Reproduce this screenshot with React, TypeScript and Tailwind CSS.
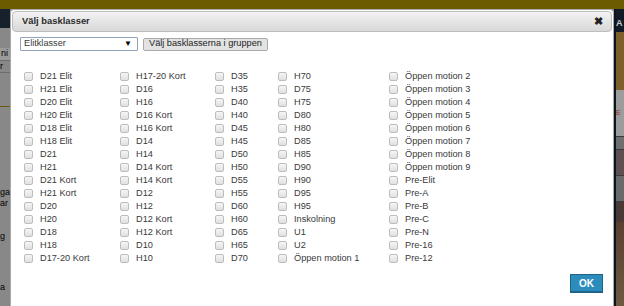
const columns: { width: string; items: string[] }[] = [
  {
    width: 'w-[96px]',
    items: ['D21 Elit', 'H21 Elit', 'D20 Elit', 'H20 Elit', 'D18 Elit', 'H18 Elit', 'D21', 'H21', 'D21 Kort', 'H21 Kort', 'D20', 'H20', 'D18', 'H18', 'D17-20 Kort'],
  },
  {
    width: 'w-[95px]',
    items: ['H17-20 Kort', 'D16', 'H16', 'D16 Kort', 'H16 Kort', 'D14', 'H14', 'D14 Kort', 'H14 Kort', 'D12', 'H12', 'D12 Kort', 'H12 Kort', 'D10', 'H10'],
  },
  {
    width: 'w-[63px]',
    items: ['D35', 'H35', 'D40', 'H40', 'D45', 'H45', 'D50', 'H50', 'D55', 'H55', 'D60', 'H60', 'D65', 'H65', 'D70'],
  },
  {
    width: 'w-[111px]',
    items: ['H70', 'D75', 'H75', 'D80', 'H80', 'D85', 'H85', 'D90', 'H90', 'D95', 'H95', 'Inskolning', 'U1', 'U2', 'Öppen motion 1'],
  },
  {
    width: 'w-[120px]',
    items: ['Öppen motion 2', 'Öppen motion 3', 'Öppen motion 4', 'Öppen motion 5', 'Öppen motion 6', 'Öppen motion 7', 'Öppen motion 8', 'Öppen motion 9', 'Pre-Elit', 'Pre-A', 'Pre-B', 'Pre-C', 'Pre-N', 'Pre-16', 'Pre-12'],
  },
];

function Checkbox() {
  return (
    <span className="block h-[9px] w-[9px] shrink-0 rounded-[2px] border border-[#bdbdbd] bg-gradient-to-b from-[#f6f6f6] to-[#e0e0e0]" />
  );
}

export default function App() {
  return (
    <div
      className="flex h-[306px] w-[624px] flex-col overflow-hidden bg-[#878787]"
      style={{ fontFamily: '"Liberation Sans", Arial, sans-serif' }}
    >
      {/* olive strip at the top of the page behind the modal */}
      <div className="h-[9px] shrink-0 bg-[#6d5b00]" />

      <div className="flex min-h-0 flex-1">
        {/* left page, dimmed */}
        <div className="flex w-[10px] shrink-0 flex-col overflow-hidden bg-[#888888] text-[9px] leading-[11px] text-black">
          <div className="h-[19px] shrink-0 bg-[#17212d]" />
          <div className="mt-[20px] h-[13px] shrink-0 border-b border-[#6d6d6d] bg-[#9a9a9a] pl-[1px] whitespace-nowrap">ni</div>
          <div className="h-[12px] shrink-0 border-b border-[#6d6d6d] whitespace-nowrap">r</div>
          <div className="mt-[33px] h-px shrink-0 bg-[#6a5a10]" />
          <div className="mt-[80px] whitespace-nowrap">ga</div>
          <div className="whitespace-nowrap">ar</div>
          <div className="mt-[22px] whitespace-nowrap">g</div>
          <div className="mt-[40px] whitespace-nowrap">a</div>
        </div>

        {/* dialog */}
        <div className="flex w-[604px] shrink-0 flex-col rounded-t-[4px] border border-b-0 border-[#a8a8a8] bg-white px-[1px] pt-[1px] text-[9.2px] text-[#3a3a3a]">
          <div className="flex h-[21px] shrink-0 items-center justify-between rounded-[4px] border border-[#bdbdbd] bg-gradient-to-b from-[#f3f3f3] to-[#d8d8d8] pl-[9px] pr-[8px]">
            <span className="text-[9.4px] font-bold text-[#2b2b2b]">Välj basklasser</span>
            <span className="text-[11px] font-bold leading-none text-[#222]">✖</span>
          </div>

          <div className="ml-[8px] mt-[5px] flex items-center gap-[5px]">
            <div className="flex h-[14px] w-[118px] items-center justify-between rounded-[1px] border border-[#8fa3bd] bg-white pl-[3px] pr-[5px]">
              <span>Elitklasser</span>
              <span className="text-[8px] text-black">▼</span>
            </div>
            <div className="flex h-[13px] items-center rounded-[2px] border border-[#a9a9a9] bg-[#e3e3e3] px-[5px] text-[#222]">
              Välj basklasserna i gruppen
            </div>
          </div>

          <div className="ml-[12px] mt-[19px] flex">
            {columns.map((col, ci) => (
              <div key={ci} className={`flex flex-col ${col.width}`}>
                {col.items.map((label) => (
                  <label key={label} className="flex h-[13px] items-center gap-[7px] whitespace-nowrap">
                    <Checkbox />
                    <span>{label}</span>
                  </label>
                ))}
              </div>
            ))}
          </div>

          <div className="mr-[9px] mt-[9px] flex justify-end">
            <button
              type="button"
              className="flex h-[19px] w-[33px] items-center justify-center border border-[#1d6488] border-b-[2px] bg-[#2c8dbd] text-[10px] font-bold text-white"
            >
              OK
            </button>
          </div>
        </div>

        {/* right page, dimmed */}
        <div className="flex min-w-0 flex-1 flex-col overflow-hidden border-l-2 border-[#0c1420] bg-[#111b27]">
          <div className="h-[23px] shrink-0 pt-[10px] text-[9px] font-bold leading-none text-[#c9c9c9]">A</div>
          <div className="h-[58px] shrink-0 bg-[#7e5f2a]" />
          <div className="flex h-[46px] shrink-0 items-center bg-[#9c9c9c] text-[7px] text-[#8a2d2d]">E</div>
          <div className="h-[14px] shrink-0 border-y border-[#3b3b3b] bg-[#6e6e6e]" />
          <div className="h-[26px] shrink-0 border-b border-[#3b3b3b] bg-[#5e5050]" />
          <div className="h-[26px] shrink-0 border-b border-[#3b3b3b] bg-[#6a6a6a]" />
          <div className="h-[20px] shrink-0 bg-[#4a3a36]" />
          <div className="flex-1 bg-gradient-to-b from-[#5a4030] to-[#6d5a40]" />
        </div>
      </div>
    </div>
  );
}
